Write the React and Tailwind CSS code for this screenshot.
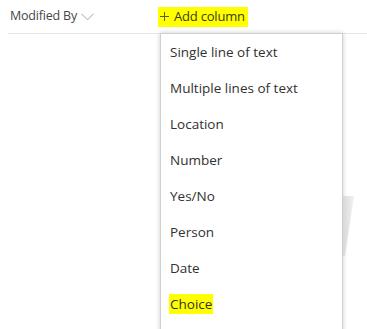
const columnTypes = [
  "Single line of text",
  "Multiple lines of text",
  "Location",
  "Number",
  "Yes/No",
  "Person",
  "Date",
  "Choice",
];

export default function App() {
  return (
    <div className="w-[367px] h-[329px] bg-white overflow-hidden relative font-['Open_Sans',sans-serif] text-[#323130]">
      <div className="flex items-center h-[34px] ml-[8px] border-b border-[#e6e6e6]">
        <div className="flex items-center w-[150px] pl-[2px] text-[12.5px] tracking-[-0.2px] text-[#484644]">
          <span>Modified By</span>
          <svg width="13" height="8" viewBox="0 0 13 8" className="ml-[4px] mt-[1px]">
            <path d="M0.5 0.8 L6.5 6.8 L12.5 0.8" fill="none" stroke="#a6a6a6" strokeWidth="1" />
          </svg>
        </div>
        <div className="flex items-center h-[20px] bg-[#ffff00] pl-[2px] pr-[3px] text-[13px] tracking-[-0.2px] text-[#3b3a1a]">
          <svg width="9" height="9" viewBox="0 0 9 9" className="mr-[5px]">
            <path d="M4.5 0 V9 M0 4.5 H9" stroke="#5a5a2a" strokeWidth="1" />
          </svg>
          <span>Add column</span>
        </div>
      </div>

      <div className="absolute left-[160px] top-[33px] w-[183px] h-[300px] bg-white border border-[#d0d0d0] shadow-[0_0_5px_rgba(0,0,0,0.2)]">
        <ul>
          {columnTypes.map((t) => (
            <li key={t} className="h-[36px] flex items-center pl-[9px] text-[13.5px] text-[#323130]">
              <span className={t === "Choice" ? "bg-[#ffff00] px-[1px] -ml-[1px]" : ""}>{t}</span>
            </li>
          ))}
        </ul>
      </div>

      <svg className="absolute left-[343px] top-[196px]" width="12" height="60" viewBox="0 0 12 60">
        <defs>
          <linearGradient id="wedge" x1="0" y1="0" x2="1" y2="0">
            <stop offset="0" stopColor="#d8d8d8" />
            <stop offset="1" stopColor="#f2f2f2" />
          </linearGradient>
        </defs>
        <polygon points="0,0 11,0 2,60 0,60" fill="url(#wedge)" />
      </svg>
    </div>
  );
}
